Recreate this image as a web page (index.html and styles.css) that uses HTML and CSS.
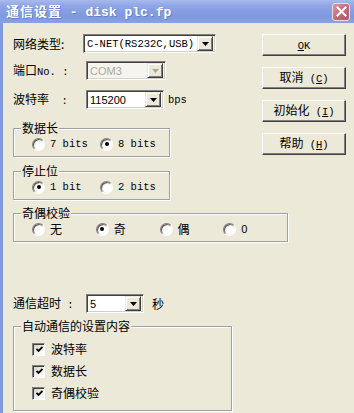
FILE: index.html
```html
<!DOCTYPE html>
<html lang="zh-CN">
<head>
    <meta charset="UTF-8">
    <title>通信设置</title>
    <link rel="stylesheet" href="styles.css">
</head>
<body>
    <div class="window">
        <div class="titlebar">
            <span class="title">通信设置<span class="mono"> - disk plc.fp</span></span>
            <span class="close">
                <svg width="11" height="11" viewBox="0 0 11 11"><path d="M1.5 1.5 L9.5 9.5 M9.5 1.5 L1.5 9.5" stroke="#fff" stroke-width="2" stroke-linecap="square"/></svg>
            </span>
        </div>

        <div class="client">
            <div class="top">
                <div class="fields">
                    <div class="row">
                        <span class="label label-net">网络类型:</span>
                        <div class="combo combo-net">
                            <span class="combo-text mono">C-NET(RS232C,USB)</span>
                            <span class="combo-btn"><svg width="7" height="4" viewBox="0 0 7 4"><path d="M0 0 H7 L3.5 4 Z" fill="#000"/></svg></span>
                        </div>
                    </div>
                    <div class="row row-port">
                        <span class="label">端口<span class="mono">No. :</span></span>
                        <div class="combo combo-port disabled">
                            <span class="combo-text">COM3</span>
                            <span class="combo-btn"><svg width="7" height="4" viewBox="0 0 7 4"><path d="M0 0 H7 L3.5 4 Z" fill="#aca899"/></svg></span>
                        </div>
                    </div>
                    <div class="row row-baud">
                        <span class="label">波特率<span class="mono">  :</span></span>
                        <div class="combo combo-baud">
                            <span class="combo-text">115200</span>
                            <span class="combo-btn"><svg width="7" height="4" viewBox="0 0 7 4"><path d="M0 0 H7 L3.5 4 Z" fill="#000"/></svg></span>
                        </div>
                        <span class="unit mono">bps</span>
                    </div>

                    <div class="group group-data">
                        <div class="group-title">数据长</div>
                        <div class="options">
                            <span class="opt"><i class="radio"></i><span class="mono">7 bits</span></span>
                            <span class="opt"><i class="radio checked"></i><span class="mono">8 bits</span></span>
                        </div>
                    </div>

                    <div class="group group-stop">
                        <div class="group-title">停止位</div>
                        <div class="options">
                            <span class="opt"><i class="radio checked"></i><span class="mono">1 bit</span></span>
                            <span class="opt"><i class="radio"></i><span class="mono">2 bits</span></span>
                        </div>
                    </div>
                </div>

                <div class="buttons">
                    <button class="btn" type="button"><span class="mono"><u>O</u>K</span></button>
                    <button class="btn" type="button">取消<span class="mono"> (<u>C</u>)</span></button>
                    <button class="btn" type="button">初始化<span class="mono"> (<u>I</u>)</span></button>
                    <button class="btn" type="button">帮助<span class="mono"> (<u>H</u>)</span></button>
                </div>
            </div>

            <div class="group group-parity">
                <div class="group-title">奇偶校验</div>
                <div class="options">
                    <span class="opt"><i class="radio"></i>无</span>
                    <span class="opt"><i class="radio checked"></i>奇</span>
                    <span class="opt"><i class="radio"></i>偶</span>
                    <span class="opt"><i class="radio"></i><span class="sans">0</span></span>
                </div>
            </div>

            <div class="row row-timeout">
                <span class="label">通信超时<span class="mono"> :</span></span>
                <div class="combo combo-timeout">
                    <span class="combo-text">5</span>
                    <span class="combo-btn"><svg width="7" height="4" viewBox="0 0 7 4"><path d="M0 0 H7 L3.5 4 Z" fill="#000"/></svg></span>
                </div>
                <span class="unit unit-sec">秒</span>
            </div>

            <div class="group group-auto">
                <div class="group-title">自动通信的设置内容</div>
                <div class="checks">
                    <span class="check-row"><i class="checkbox"><svg width="7" height="7" viewBox="0 0 7 7"><path d="M0.5 3 L2.5 5 L6.5 1" stroke="#000" stroke-width="1.8" fill="none"/></svg></i>波特率</span>
                    <span class="check-row"><i class="checkbox"><svg width="7" height="7" viewBox="0 0 7 7"><path d="M0.5 3 L2.5 5 L6.5 1" stroke="#000" stroke-width="1.8" fill="none"/></svg></i>数据长</span>
                    <span class="check-row"><i class="checkbox"><svg width="7" height="7" viewBox="0 0 7 7"><path d="M0.5 3 L2.5 5 L6.5 1" stroke="#000" stroke-width="1.8" fill="none"/></svg></i>奇偶校验</span>
                </div>
            </div>
        </div>
    </div>
</body>
</html>
```

FILE: styles.css
```css
* {
    box-sizing: border-box;
}

body {
    margin: 0;
    width: 354px;
    height: 413px;
    overflow: hidden;
    background-color: #ece9d8;
    font-family: "Noto Sans CJK SC", sans-serif;
    font-size: 12px;
    line-height: 14px;
    color: #000;
}

.mono {
    font-family: "Liberation Mono", "Noto Sans CJK SC", monospace;
    font-size: 10.5px;
    white-space: pre;
}

.sans {
    font-family: "Liberation Sans", sans-serif;
    font-size: 11px;
}

.window {
    display: flex;
    flex-direction: column;
    height: 413px;
}

/* title bar */
.titlebar {
    flex: none;
    height: 23px;
    display: flex;
    align-items: center;
    justify-content: space-between;
    padding: 0 4px 0 6px;
    background: linear-gradient(#a9baec, #8fa6e5 25%, #7f98e0 70%, #8aa1e3);
    color: #fff;
    font-weight: bold;
    font-size: 13px;
    text-shadow: 1px 1px #6b80c4;
}

.titlebar .title {
    letter-spacing: 1px;
}

.titlebar .mono {
    font-size: 13px;
    font-weight: bold;
    letter-spacing: 0;
}

.close {
    width: 18px;
    height: 18px;
    border: 1px solid #eed8dc;
    border-radius: 3px;
    background: linear-gradient(135deg, #d79aa3, #bd6675 60%, #b45a6a);
    display: flex;
    align-items: center;
    justify-content: center;
}

/* client area */
.client {
    flex: 1;
    border-left: 3px solid #7f98e0;
    padding: 11px 8px 0 10px;
    display: flex;
    flex-direction: column;
}

.top {
    display: flex;
    align-items: flex-start;
}

.fields {
    display: flex;
    flex-direction: column;
}

.row {
    display: flex;
    align-items: center;
    height: 19px;
}

.row-port {
    margin-top: 8px;
}

.row-baud {
    margin-top: 10px;
}

.label {
    width: 73px;
    flex: none;
}

.label-net {
    width: 70px;
}

.unit {
    margin-left: 4px;
}

.unit-sec {
    margin-left: 8px;
}

/* combo boxes */
.combo {
    height: 19px;
    display: flex;
    align-items: center;
    background-color: #fff;
    border: 1px solid;
    border-color: #808080 #fff #fff #808080;
    box-shadow: inset 1px 1px #404040, inset -1px -1px #d4d0c8;
    padding: 1px;
}

.combo-net { width: 133px; }
.combo-port { width: 80px; }
.combo-baud { width: 78px; }
.combo-timeout { width: 58px; }

.combo-text {
    flex: 1;
    padding-left: 2px;
    font-family: "Liberation Sans", sans-serif;
    font-size: 11px;
    overflow: hidden;
}

.combo-text.mono {
    font-family: "Liberation Mono", monospace;
    font-size: 10.5px;
}

.combo-btn {
    width: 16px;
    height: 15px;
    margin-right: 1px;
    display: flex;
    align-items: center;
    justify-content: center;
    background-color: #ece9d8;
    border: 1px solid;
    border-color: #ece9d8 #404040 #404040 #ece9d8;
    box-shadow: inset 1px 1px #fff, inset -1px -1px #808080;
}

.combo.disabled {
    background-color: #f5f4ef;
}

.combo.disabled .combo-text {
    color: #aca899;
}

/* buttons */
.buttons {
    margin-left: auto;
    display: flex;
    flex-direction: column;
    gap: 11px;
}

.btn {
    width: 84px;
    height: 22px;
    padding: 0;
    background-color: #ece9d8;
    border: 1px solid;
    border-color: #fff #404040 #404040 #fff;
    box-shadow: inset -1px -1px #808080;
    font-family: "Noto Sans CJK SC", sans-serif;
    font-size: 12px;
    line-height: 14px;
    color: #000;
}

/* group boxes */
.group {
    border: 1px solid #a0a0a0;
    box-shadow: inset 1px 1px #fff, 1px 1px #fff;
    padding: 0 0 5px 0;
}

.group-title {
    width: fit-content;
    margin: -8px 0 0 7px;
    padding: 0 1px;
    background-color: #ece9d8;
    height: 14px;
}

.group-data {
    width: 157px;
    margin-top: 19px;
}

.group-stop {
    width: 157px;
    margin-top: 14px;
}

.group-parity {
    width: 275px;
    margin-top: 13px;
}

.options {
    display: flex;
    height: 14px;
    margin-top: 2px;
    padding-left: 18px;
}

.opt {
    width: 68px;
    display: flex;
    align-items: center;
    gap: 5px;
}

.radio {
    width: 13px;
    height: 13px;
    flex: none;
    border-radius: 50%;
    border: 1px solid;
    border-color: #808080 #fff #fff #808080;
    background: radial-gradient(circle at 60% 60%, #fff 35%, #e4e2d6 75%, #c9c6b6);
    box-shadow: inset 1px 1px #5a5a5a;
    display: flex;
    align-items: center;
    justify-content: center;
}

.radio.checked::after {
    content: "";
    width: 4px;
    height: 4px;
    border-radius: 50%;
    background-color: #000;
}

.row-timeout {
    margin-top: 52px;
}

.group-auto {
    width: 219px;
    margin-top: 13px;
    padding-bottom: 6px;
}

.checks {
    display: flex;
    flex-direction: column;
    margin-top: 5px;
    padding-left: 18px;
}

.check-row {
    height: 22px;
    display: flex;
    align-items: center;
    gap: 6px;
}

.checkbox {
    width: 13px;
    height: 13px;
    flex: none;
    border: 1px solid;
    border-color: #808080 #fff #fff #808080;
    box-shadow: inset 1px 1px #404040;
    background: linear-gradient(135deg, #c9c6b6, #f4f3ee 55%, #fff);
    display: flex;
    align-items: center;
    justify-content: center;
    padding: 1px 0 0 1px;
}
```
